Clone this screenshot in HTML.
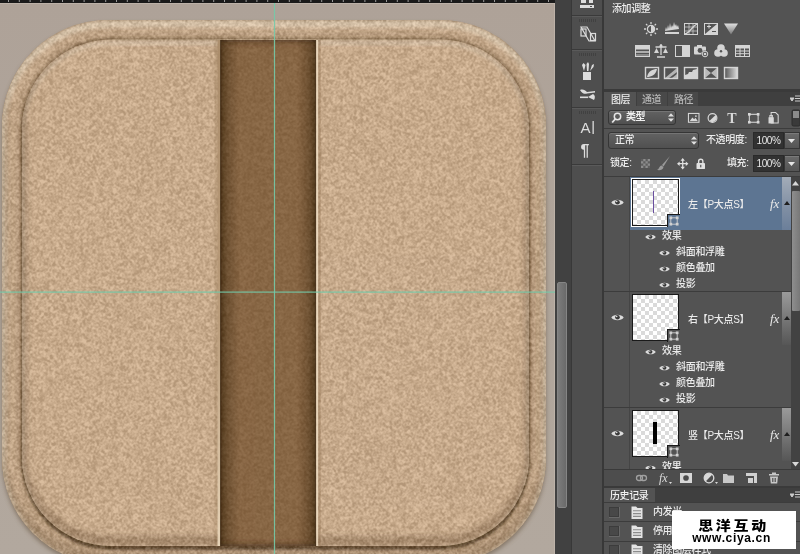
<!DOCTYPE html>
<html><head><meta charset="utf-8">
<style>
*{margin:0;padding:0;box-sizing:border-box}
html,body{width:800px;height:554px;overflow:hidden;background:#535353;font-family:"Liberation Sans","Noto Sans CJK SC",sans-serif;font-size:12px;color:#e0e0e0}
.abs{position:absolute}
#canvas{position:absolute;left:0;top:0;width:555px;height:554px;overflow:hidden}
#vscroll{position:absolute;left:555px;top:0;width:16px;height:554px;background:#414141}
#vthumb{position:absolute;left:2px;top:282px;width:10px;height:226px;border-radius:2px;background:linear-gradient(90deg,#7c7c7c,#6a6a6a);border:1px solid #858585}
#iconcol{position:absolute;left:571px;top:0;width:33px;height:554px;background:#4e4e4e;border-left:1px solid #383838;border-right:2px solid #383838}
#panels{position:absolute;left:604px;top:0;width:196px;height:554px;background:#535353}
.sep{position:absolute;left:0;width:30px;height:2px;background:#3a3a3a;border-bottom:1px solid #5a5a5a}
.grip{position:absolute;left:7px;width:17px;height:3px;background:repeating-linear-gradient(90deg,#414141 0 1px,#4e4e4e 1px 2px)}
.t,.fxl,.fx,#iconcol svg,#panels svg{will-change:transform}
.t{position:absolute;white-space:nowrap;line-height:14px}
</style></head><body>
<div id="canvas">
<!--CANVAS-->
<svg class="abs" style="left:0;top:0" width="556" height="554" viewBox="0 0 556 554">
<defs>
<linearGradient id="bgg" x1="0" y1="0" x2="0" y2="1"><stop offset="0" stop-color="#aea298"/><stop offset="1" stop-color="#b2a89e"/></linearGradient>
<linearGradient id="lstrip" x1="0" y1="0" x2="0" y2="1"><stop offset="0" stop-color="#a88a68"/><stop offset=".55" stop-color="#b89a78"/><stop offset="1" stop-color="#ead8bc"/></linearGradient>
<linearGradient id="slotg" x1="0" y1="0" x2="1" y2="0"><stop offset="0" stop-color="#523819"/><stop offset=".07" stop-color="#6e4f2e"/><stop offset=".2" stop-color="#896541"/><stop offset=".8" stop-color="#896541"/><stop offset=".93" stop-color="#6e4f2e"/><stop offset="1" stop-color="#523819"/></linearGradient>
<filter id="nz" x="0" y="0" width="100%" height="100%" color-interpolation-filters="sRGB">
<feTurbulence type="fractalNoise" baseFrequency="1.7" numOctaves="1" seed="11" result="t"/>
<feColorMatrix in="t" type="matrix" values="2.2 2.2 0 0 -1.7  2.2 2.2 0 0 -1.7  2.2 2.2 0 0 -1.7  0 0 0 0 1"/><feConvolveMatrix order="3" kernelMatrix="1 2 1 2 5 2 1 2 1" divisor="17" edgeMode="duplicate" preserveAlpha="true"/><feComponentTransfer><feFuncR type="linear" slope="2" intercept="-.5"/><feFuncG type="linear" slope="2" intercept="-.5"/><feFuncB type="linear" slope="2" intercept="-.5"/></feComponentTransfer>
</filter>
<filter id="b3" x="-10%" y="-10%" width="120%" height="120%"><feGaussianBlur stdDeviation="3"/></filter>
<filter id="b2" x="-10%" y="-10%" width="120%" height="120%"><feGaussianBlur stdDeviation="2"/></filter>
<filter id="b15" x="-10%" y="-10%" width="120%" height="120%"><feGaussianBlur stdDeviation="1.6"/></filter>
<filter id="b1" x="-10%" y="-10%" width="120%" height="120%"><feGaussianBlur stdDeviation="1"/></filter>
<filter id="b5" x="-10%" y="-10%" width="120%" height="120%"><feGaussianBlur stdDeviation="5"/></filter>
<clipPath id="cOuter"><rect x="2" y="20" width="544" height="544" rx="106"/></clipPath>
<clipPath id="cInner"><rect x="22" y="39.500" width="507" height="506.500" rx="89"/></clipPath>
<clipPath id="cSlot"><rect x="221" y="40" width="94.500" height="506"/></clipPath>
</defs>
<rect width="556" height="554" fill="url(#bgg)"/>
<rect x="0" y="3" width="556" height="1" fill="#c4bab0" opacity=".6"/>
<rect x="554" y="3" width="1" height="551" fill="#c4bab0" opacity=".6"/>
<!-- outer shadow -->
<rect x="2" y="23" width="544" height="544" rx="106" fill="#5a4630" opacity=".5" filter="url(#b2)"/>
<!-- outer -->
<rect x="2" y="20" width="544" height="544" rx="106" fill="#d0af8c"/>
<g clip-path="url(#cOuter)">
  <rect x="2" y="19" width="544" height="544" rx="106" fill="none" stroke="#7d6040" stroke-width="3" opacity=".4" filter="url(#b1)"/>
  <rect x="2" y="14" width="544" height="544" rx="106" fill="none" stroke="#6b4f30" stroke-width="8" opacity=".45" filter="url(#b3)"/>
  <rect x="2" y="24" width="544" height="544" rx="106" fill="none" stroke="#f8ead2" stroke-width="7" opacity=".55" filter="url(#b2)"/>
</g>
<!-- inner shadow/drop -->
<g clip-path="url(#cOuter)">
<rect x="22" y="39.500" width="507" height="506.500" rx="89" fill="none" stroke="#7d5f3e" stroke-width="9" opacity=".3" filter="url(#b3)"/>
<rect x="22" y="43" width="507" height="506.500" rx="89" fill="#4a3216" opacity=".9" filter="url(#b15)"/>
<rect x="22" y="39.500" width="507" height="506.500" rx="89" fill="none" stroke="#6e5233" stroke-width="2.500" opacity=".7" filter="url(#b1)"/>
</g>
<rect x="22" y="39.500" width="507" height="506.500" rx="89" fill="#d4b28e"/>
<g clip-path="url(#cInner)">
  <rect x="22" y="42.500" width="507" height="506.500" rx="89" fill="none" stroke="#f6e8d2" stroke-width="4" opacity=".55" filter="url(#b2)"/>
  <rect x="22" y="34.500" width="507" height="506.500" rx="89" fill="none" stroke="#6e5030" stroke-width="8" opacity=".5" filter="url(#b3)"/>
</g>
<!-- noise -->
<g clip-path="url(#cOuter)" opacity=".15">
  <rect x="0" y="0" width="556" height="554" filter="url(#nz)"/>
</g>
<!-- slot -->
<rect x="221" y="40" width="94.500" height="506" fill="url(#slotg)"/>
<g clip-path="url(#cSlot)">
  <rect x="211" y="36" width="114.500" height="514" fill="none" stroke="#2e1f10" stroke-width="12" opacity=".55" filter="url(#b3)"/>
  <rect x="0" y="0" width="556" height="554" filter="url(#nz)" opacity=".06"/>
</g>
<!-- left/right panel edges -->
<rect x="217.500" y="40" width="2.700" height="506" fill="url(#lstrip)" opacity=".9"/>
<rect x="214.500" y="40" width="3" height="506" fill="#7a5c3a" opacity=".18"/>
<rect x="220" y="40" width="1.300" height="506" fill="#3e2a14" opacity=".85"/>
<rect x="315" y="40" width="1.200" height="506" fill="#3e2a14" opacity=".8"/>
<rect x="316.200" y="40" width="2" height="506" fill="#ecdcc2" opacity=".85"/>
<rect x="318.200" y="40" width="2.500" height="506" fill="#7a5c3a" opacity=".3"/>
<!-- guides -->
<rect x="273.900" y="3" width="1.200" height="551" fill="#74caa8" opacity=".9"/>
<rect x="0" y="291.500" width="556" height="1.200" fill="#74caa8" opacity=".9"/>
<!-- ruler -->
<rect x="0" y="0" width="556" height="3" fill="#1a1a1a"/>
<g fill="#9a9a9a">
<rect x="8.0" y="0" width="1" height="2"/><rect x="18.8" y="0" width="1" height="2"/><rect x="29.6" y="0" width="1" height="2"/><rect x="40.4" y="0" width="1" height="2"/><rect x="51.2" y="0" width="1" height="2"/><rect x="62.0" y="0" width="1" height="2"/><rect x="72.8" y="0" width="1" height="2"/><rect x="83.6" y="0" width="1" height="2"/><rect x="94.4" y="0" width="1" height="2"/><rect x="105.2" y="0" width="1" height="2"/><rect x="116.0" y="0" width="1" height="2"/><rect x="126.8" y="0" width="1" height="2"/><rect x="137.6" y="0" width="1" height="2"/><rect x="148.4" y="0" width="1" height="2"/><rect x="159.2" y="0" width="1" height="2"/><rect x="170.0" y="0" width="1" height="2"/><rect x="180.8" y="0" width="1" height="2"/><rect x="191.6" y="0" width="1" height="2"/><rect x="202.4" y="0" width="1" height="2"/><rect x="213.2" y="0" width="1" height="2"/><rect x="224.0" y="0" width="1" height="2"/><rect x="234.8" y="0" width="1" height="2"/><rect x="245.6" y="0" width="1" height="2"/><rect x="256.4" y="0" width="1" height="2"/><rect x="267.2" y="0" width="1" height="2"/><rect x="278.0" y="0" width="1" height="2"/><rect x="288.8" y="0" width="1" height="2"/><rect x="299.6" y="0" width="1" height="2"/><rect x="310.4" y="0" width="1" height="2"/><rect x="321.2" y="0" width="1" height="2"/><rect x="332.0" y="0" width="1" height="2"/><rect x="342.8" y="0" width="1" height="2"/><rect x="353.6" y="0" width="1" height="2"/><rect x="364.4" y="0" width="1" height="2"/><rect x="375.2" y="0" width="1" height="2"/><rect x="386.0" y="0" width="1" height="2"/><rect x="396.8" y="0" width="1" height="2"/><rect x="407.6" y="0" width="1" height="2"/><rect x="418.4" y="0" width="1" height="2"/><rect x="429.2" y="0" width="1" height="2"/><rect x="440.0" y="0" width="1" height="2"/><rect x="450.8" y="0" width="1" height="2"/><rect x="461.6" y="0" width="1" height="2"/><rect x="472.4" y="0" width="1" height="2"/><rect x="483.2" y="0" width="1" height="2"/><rect x="494.0" y="0" width="1" height="2"/><rect x="504.8" y="0" width="1" height="2"/><rect x="515.6" y="0" width="1" height="2"/><rect x="526.4" y="0" width="1" height="2"/><rect x="537.2" y="0" width="1" height="2"/><rect x="548.0" y="0" width="1" height="2"/>
</g>
</svg>
<!--/CANVAS-->
</div>
<div id="vscroll"><div id="vthumb"></div></div>
<div id="iconcol">
<!--ICONCOL-->
<div class="sep" style="top:15px"></div><div class="grip" style="top:19px"></div>
<div class="sep" style="top:49px"></div><div class="grip" style="top:53px"></div>
<div class="sep" style="top:107px"></div><div class="grip" style="top:111px"></div>
<div class="sep" style="top:164px"></div>
<svg class="abs" style="left:0;top:0" width="30" height="170" viewBox="0 0 30 170">
<g fill="#dcdcdc">
<!-- top partial icon -->
<rect x="9" y="0" width="5" height="3"/><rect x="17" y="0" width="4" height="3"/><rect x="8" y="5" width="14" height="3"/><rect x="18" y="6" width="2" height="1" fill="#4e4e4e"/>
<!-- clone source -->
<g fill="none" stroke="#dcdcdc" stroke-width="1.200"><path d="M9 27h6l8 14h-6z"/><rect x="9" y="29" width="5" height="7"/><rect x="18.500" y="33.500" width="5" height="7"/></g>
<!-- brushes cup -->
<path d="M11 72h8v8h-8z"/><path d="M12 71l-2-6 1.500-2 2 2zM15 71l-.5-7 1.500-2 1 2-.5 7zM18 71l2-6 2-1-.5 3z"/>
<!-- brush presets -->
<path d="M8 90c3-1 5 0 7 2l8-1v1.500l-8 1c-2 1-5 0-7-3.500z"/><rect x="8" y="96.500" width="8" height="1.600"/><path d="M16 97l5-3c2 1 2.500 3.500 1 6z"/>
<!-- A| -->
</g>
<text x="8.500" y="133" font-family="Liberation Sans,sans-serif" font-size="15" fill="#dcdcdc">A</text><rect x="20.500" y="121" width="1.300" height="13" fill="#dcdcdc"/>
<text x="8.500" y="156" font-family="Liberation Sans,sans-serif" font-weight="bold" font-size="16" fill="#dcdcdc">¶</text>
</svg>
<!--/ICONCOL-->
</div>
<div id="panels">
<!--PANELS-->
<style>
#panels .t{color:#ececec;font-size:10px;font-weight:500;letter-spacing:-.4px}
.ic{position:absolute}
.dd{position:absolute;border:1px solid #363636;border-radius:3px;background:linear-gradient(#626262,#505050);box-shadow:inset 0 1px 0 #747474}
.fld{position:absolute;will-change:transform;background:#323232;border:1px solid #2a2a2a;color:#e6e6e6;font-size:10px;letter-spacing:-.4px;line-height:15px;text-align:center}
.btn{position:absolute;border:1px solid #363636;background:linear-gradient(#6a6a6a,#555);box-shadow:inset 0 1px 0 #7a7a7a}
.hl{position:absolute;left:0;width:196px;height:1px;background:#3c3c3c}
.eye{position:absolute;width:13px;height:9px}.eye.s{width:11px;height:8px}
.lrow{position:absolute;left:0;width:187px;height:54px}
.thumb{position:absolute;left:28px;top:2px;width:47px;height:47px;border:1px solid #1a1a1a;background-color:#fff;background-image:linear-gradient(45deg,#dadada 25%,transparent 25%,transparent 75%,#dadada 75%),linear-gradient(45deg,#dadada 25%,transparent 25%,transparent 75%,#dadada 75%);background-size:8px 8px;background-position:0 0,4px 4px}
.vm{position:absolute;left:63px;top:37px;width:13px;height:13px;background:#535353;border-top:1px solid #1a1a1a;border-left:1px solid #1a1a1a}
.fx{position:absolute;left:166px;font-family:"Liberation Serif",serif;font-style:italic;font-size:13px;color:#e8e8e8;line-height:14px}
.grad{position:absolute;left:178px;width:9px;height:53px}
.fxl{position:absolute;font-size:10px;font-weight:500;letter-spacing:-.3px;color:#ececec;white-space:nowrap;line-height:14px}
</style>
<!-- adjustments -->
<div class="t" style="left:8px;top:2px">添加调整</div>
<svg class="abs" style="left:0;top:0" width="196" height="90" viewBox="0 0 196 90">
<g fill="#d4d4d4" stroke="none">
<!-- row1 y~29 -->
<g transform="translate(47,29)"><circle r="3.6" fill="none" stroke="#d4d4d4" stroke-width="1.3"/><path d="M0-3.6A3.6 3.6 0 0 1 0 3.6z"/><g stroke="#d4d4d4" stroke-width="1.3"><path d="M0-7v2M0 5v2M-7 0h2M5 0h2M-5-5l1.4 1.4M3.6 3.6L5 5M-5 5l1.4-1.4M3.6-3.6L5-5"/></g></g>
<g transform="translate(61,23)"><path d="M0 11h14v-2h-14zM0 8l1-4 1 3 1-5 1 4 1-6 1 5 1-3 1 2 1-5 1 4 1-2 1 3 1-2 1 4z"/></g>
<g transform="translate(80,23)"><rect x=".5" y=".5" width="13" height="11" fill="none" stroke="#d4d4d4"/><path d="M1 4h12M1 8h12M5 1v10M9 1v10" stroke="#d4d4d4" stroke-width=".7" fill="none"/><path d="M1 11C6 10 8 3 13 1" stroke="#d4d4d4" stroke-width="1.3" fill="none"/></g>
<g transform="translate(100,23)"><rect x=".5" y=".5" width="13" height="11" fill="none" stroke="#d4d4d4"/><path d="M1 11L13 1V11z"/><path d="M3 3.5h4M5 1.5v4" stroke="#d4d4d4" fill="none"/><path d="M8 8.5h4" stroke="#535353" fill="none"/></g>
<g transform="translate(120,23)"><path d="M0 .5h14l-7 11z" fill="url(#gv)"/></g>
<!-- row2 y~51 -->
<g transform="translate(31,45)"><rect x=".5" y=".5" width="14" height="11" fill="none" stroke="#d4d4d4"/><rect x="1" y="1" width="13" height="3.5"/><rect x="1" y="6" width="13" height="2" opacity=".7"/><rect x="1" y="9" width="13" height="2" opacity=".4"/></g>
<g transform="translate(50,44)"><path d="M7 0v11M3 13h8M1.5 3h11" stroke="#d4d4d4" stroke-width="1.3" fill="none"/><path d="M0 9h5l-2.5-5zM9 9h5l-2.5-5z"/><circle cx="7" cy="2" r="1.6"/></g>
<g transform="translate(71,45)"><rect x=".5" y=".5" width="14" height="11" fill="none" stroke="#d4d4d4"/><rect x="7" y="1" width="7" height="10"/></g>
<g transform="translate(90,44)"><rect x="0" y="2.5" width="12" height="8" rx="1"/><rect x="3" y="1" width="5" height="2"/><circle cx="6" cy="6.5" r="2.4" fill="#535353"/><circle cx="11" cy="10" r="3.6" fill="#535353"/><circle cx="11" cy="10" r="2.8" fill="none" stroke="#d4d4d4"/><circle cx="11" cy="10" r="1.3"/></g>
<g transform="translate(110,44)"><circle cx="7" cy="4" r="3.8"/><circle cx="4" cy="9" r="3.8"/><circle cx="10" cy="9" r="3.8"/><circle cx="7" cy="7.2" r="1.2" fill="#535353"/></g>
<g transform="translate(131,45)"><rect x=".5" y=".5" width="14" height="11" fill="none" stroke="#d4d4d4"/><rect x="1" y="1" width="13" height="2.5"/><path d="M1 6h13M1 8.7h13M5 3v8M9.5 3v8" stroke="#d4d4d4" stroke-width="1" fill="none"/></g>
<!-- row3 y~73 -->
<g transform="translate(41,67)"><rect x=".5" y=".5" width="13" height="11" fill="none" stroke="#d4d4d4" stroke-width="1.4"/><path d="M2 10C3 4 8 2 12 2C11 8 6 10 2 10z"/></g>
<g transform="translate(60,67)"><rect x=".5" y=".5" width="13" height="11" fill="none" stroke="#d4d4d4" stroke-width="1.4"/><path d="M1 11L13 1v4L5 11zM8 11l5-4v4z" opacity=".75"/></g>
<g transform="translate(80,67)"><rect x=".5" y=".5" width="13" height="11" fill="none" stroke="#d4d4d4" stroke-width="1.4"/><path d="M1 8l3-1 1-2 3 0 1-2 4-1V11H1z"/></g>
<g transform="translate(100,67)"><rect x=".5" y=".5" width="13" height="11" fill="none" stroke="#d4d4d4" stroke-width="1.4"/><path d="M1 1l6 5-6 5zM13 1l-6 5 6 5z" opacity=".8"/></g>
<g transform="translate(120,67)"><rect x=".5" y=".5" width="13" height="11" fill="url(#gh)" stroke="#d4d4d4" stroke-width="1.4"/></g>
</g>
<defs><linearGradient id="gv" x1="0" y1="0" x2="0" y2="1"><stop offset="0" stop-color="#e0e0e0"/><stop offset="1" stop-color="#777"/></linearGradient>
<linearGradient id="gh" x1="0" y1="0" x2="1" y2="0"><stop offset="0" stop-color="#555"/><stop offset="1" stop-color="#ddd"/></linearGradient></defs>
</svg>
<div class="abs" style="left:0;top:89px;width:196px;height:3px;background:#3a3a3a"></div>
<!-- tabs -->
<div class="abs" style="left:0;top:92px;width:196px;height:14px;background:#3f3f3f"></div>
<div class="abs" style="left:0;top:92px;width:32px;height:15px;background:#535353"></div>
<div class="abs" style="left:33px;top:92px;width:30px;height:14px;background:#494949"></div>
<div class="abs" style="left:64px;top:92px;width:30px;height:14px;background:#494949"></div>
<div class="t" style="left:7px;top:93px;color:#f0f0f0">图层</div>
<div class="t" style="left:38px;top:93px;color:#b4b4b4">通道</div>
<div class="t" style="left:70px;top:93px;color:#b4b4b4">路径</div>
<svg class="abs" style="left:186px;top:95px" width="10" height="8"><path d="M0 3h4l-2 3zM5 1h5M5 3.5h5M5 6h5" fill="#ccc" stroke="#ccc"/></svg>
<!-- filter row -->
<div class="dd" style="left:4px;top:110px;width:68px;height:15px"></div>
<svg class="abs" style="left:7px;top:112px" width="12" height="12"><circle cx="6.5" cy="4.5" r="3.2" fill="none" stroke="#e6e6e6" stroke-width="1.5"/><path d="M4.2 7L1.2 10.5" stroke="#e6e6e6" stroke-width="1.8"/></svg>
<div class="t" style="left:22px;top:110px;font-weight:bold;color:#f0f0f0">类型</div>
<svg class="abs" style="left:64px;top:113px" width="6" height="9"><path d="M0 3.500L3 .3 6 3.500zM0 5.500L3 8.700 6 5.500z" fill="#e0e0e0"/></svg>
<svg class="abs" style="left:80px;top:108px" width="116" height="20" viewBox="0 0 116 20">
<g transform="translate(4,5) scale(.88)"><rect x=".5" y=".5" width="12" height="10" fill="none" stroke="#d8d8d8" stroke-width="1.2"/><path d="M2 9l3-4 2 2 1.5-1.5L11 9z" fill="#d8d8d8"/><circle cx="9" cy="3.5" r="1" fill="#d8d8d8"/></g>
<g transform="translate(28.500,10) scale(.88)"><circle r="5" fill="none" stroke="#d8d8d8" stroke-width="1.3"/><path d="M-3.500 3.500A5 5 0 0 0 3.500-3.500z" fill="#d8d8d8"/></g>
<text x="43.200" y="15" font-family="Liberation Serif,serif" font-weight="bold" font-size="14" fill="#d8d8d8">T</text>
<g transform="translate(64,5) scale(.88)" fill="#d8d8d8"><rect x="1.500" y="1.500" width="10" height="9" fill="none" stroke="#d8d8d8" stroke-width="1.2"/><rect x="0" y="0" width="3" height="3"/><rect x="10" y="0" width="3" height="3"/><rect x="0" y="9" width="3" height="3"/><rect x="10" y="9" width="3" height="3"/></g>
<g transform="translate(84.500,4) scale(.88)" fill="#d8d8d8"><path d="M3 .5h5l3 3v9h-8z" fill="none" stroke="#d8d8d8" stroke-width="1.2"/><rect x="0" y="6" width="6" height="7"/><rect x="1.500" y="4" width="3" height="3" fill="none" stroke="#d8d8d8"/></g>
<g transform="translate(108,2)"><rect x="0" y="0" width="8" height="16" rx="1.500" fill="#3a3a3a" stroke="#2c2c2c"/><rect x="1" y="1" width="6" height="7" fill="#8a8a8a"/></g>
</svg>
<div class="hl" style="top:128px"></div>
<!-- blend row -->
<div class="dd" style="left:4px;top:132px;width:91px;height:17px"></div>
<div class="t" style="left:11px;top:133px">正常</div>
<svg class="abs" style="left:86.500px;top:136px" width="6" height="9"><path d="M0 3.500L3 .3 6 3.500zM0 5.500L3 8.700 6 5.500z" fill="#e0e0e0"/></svg>
<div class="t" style="left:102px;top:133px">不透明度:</div>
<div class="fld" style="left:149px;top:132px;width:31px;height:17px">100%</div>
<div class="btn" style="left:180px;top:132px;width:16px;height:17px"></div>
<svg class="abs" style="left:184px;top:139px" width="8" height="5"><path d="M0 0h7l-3.500 4z" fill="#e6e6e6"/></svg>
<!-- lock row -->
<div class="t" style="left:6px;top:156px">锁定:</div>
<svg class="abs" style="left:36px;top:154px" width="70" height="18" viewBox="0 0 70 18">
<g transform="translate(1,5) scale(.9)"><rect width="10" height="10" fill="#8c8c8c"/><path d="M0 0h2.500v2.500h-2.500zM5 0h2.500v2.500h-2.500zM2.500 2.500h2.500v2.500h-2.500zM7.500 2.500h2.500v2.500h-2.500zM0 5h2.500v2.500h-2.500zM5 5h2.500v2.500h-2.500zM2.500 7.500h2.500v2.500h-2.500zM7.500 7.500h2.500v2.500h-2.500z" fill="#5e5e5e"/></g>
<g transform="translate(17,2)"><path d="M13 0L5 9l1.500 1.500z" fill="#9a9a9a"/><path d="M4.500 9.500C2 10 2.500 13 0 14c3 .5 6 0 6.500-3z" fill="#9a9a9a"/></g>
<g transform="translate(37,4) scale(.88)" fill="#e0e0e0"><path d="M6.500 0l2.500 3h-5zM6.500 13l2.500-3h-5zM0 6.500l3-2.500v5zM13 6.500l-3-2.500v5z"/><path d="M6.500 2v9M2 6.500h9" stroke="#e0e0e0" stroke-width="1.400"/></g>
<g transform="translate(56.500,4) scale(.85)" fill="#e0e0e0"><path d="M2.500 6V4a2.500 2.500 0 0 1 5 0v2" fill="none" stroke="#e0e0e0" stroke-width="1.600"/><rect x="0" y="6" width="10" height="7" rx="1"/><rect x="4.300" y="8" width="1.400" height="3" fill="#535353"/></g>
</svg>
<div class="t" style="left:123px;top:156px">填充:</div>
<div class="fld" style="left:149px;top:155px;width:31px;height:17px">100%</div>
<div class="btn" style="left:180px;top:155px;width:16px;height:17px"></div>
<svg class="abs" style="left:184px;top:162px" width="8" height="5"><path d="M0 0h7l-3.500 4z" fill="#e6e6e6"/></svg>
<div class="hl" style="top:176px"></div>
<!--LAYERS-->
<!-- layer rows -->
<svg width="0" height="0" style="position:absolute"><defs>
<symbol id="eye" viewBox="0 0 13 9"><path d="M.3 4.500C2.500 .800 10.500 .800 12.700 4.500C10.500 8.200 2.500 8.200 .300 4.500z" fill="#dcdcdc"/><circle cx="6.500" cy="4.300" r="2.300" fill="#3a3a3a"/><circle cx="5.700" cy="3.500" r=".8" fill="#dcdcdc"/></symbol>
<symbol id="vmask" viewBox="0 0 11 11"><rect x="2" y="2" width="7" height="7" fill="none" stroke="#d0d0d0" stroke-width="1"/><rect x="0.500" y="0.500" width="3" height="3" fill="#d0d0d0"/><rect x="7.500" y="0.500" width="3" height="3" fill="#d0d0d0"/><rect x="0.500" y="7.500" width="3" height="3" fill="#d0d0d0"/><rect x="7.500" y="7.500" width="3" height="3" fill="#d0d0d0"/></symbol>
</defs></svg>
<div class="abs" style="left:25px;top:177px;width:1px;height:292px;background:#454545"></div>
<!-- L1 -->
<div class="lrow" style="top:177px">
 <div class="abs" style="left:26px;top:0;width:161px;height:53px;background:#5d7592"></div>
 <div class="grad" style="top:0;background:linear-gradient(#a3acb8,#7f8ea3 60%,#6b7f9a)"></div>
 <svg class="eye" style="left:7px;top:21px"><use href="#eye"/></svg>
 <div class="thumb" style="outline:1px solid #fff;outline-offset:0"><div class="abs" style="left:20px;top:11px;width:1px;height:22px;background:#6a4fa0"></div></div>
 <div class="vm" style="background:#5d7592"><svg class="abs" style="left:1px;top:1px" width="10" height="10"><use href="#vmask"/></svg></div>
 <div class="fxl" style="left:84px;top:21px">左【P大点S】</div>
 <div class="fx" style="top:20px">fx</div>
 <svg class="abs" style="left:180px;top:24px" width="6" height="5"><path d="M0 4h6l-3-4z" fill="#1e1e1e"/></svg>
</div>
<svg class="eye s" style="left:41px;top:233px"><use href="#eye"/></svg><div class="fxl" style="left:58px;top:229px">效果</div>
<svg class="eye s" style="left:55px;top:249px"><use href="#eye"/></svg><div class="fxl" style="left:72px;top:245px">斜面和浮雕</div>
<svg class="eye s" style="left:55px;top:265px"><use href="#eye"/></svg><div class="fxl" style="left:72px;top:261px">颜色叠加</div>
<svg class="eye s" style="left:55px;top:281px"><use href="#eye"/></svg><div class="fxl" style="left:72px;top:277px">投影</div>
<div class="hl" style="top:291px;width:187px"></div>
<!-- L2 -->
<div class="lrow" style="top:292px">
 <div class="grad" style="top:0;background:linear-gradient(#9a9a9a,#6a6a6a 70%,#565656)"></div>
 <svg class="eye" style="left:7px;top:21px"><use href="#eye"/></svg>
 <div class="thumb"></div>
 <div class="vm"><svg class="abs" style="left:1px;top:1px" width="10" height="10"><use href="#vmask"/></svg></div>
 <div class="fxl" style="left:84px;top:21px">右【P大点S】</div>
 <div class="fx" style="top:20px">fx</div>
 <svg class="abs" style="left:180px;top:24px" width="6" height="5"><path d="M0 4h6l-3-4z" fill="#1e1e1e"/></svg>
</div>
<svg class="eye s" style="left:41px;top:348px"><use href="#eye"/></svg><div class="fxl" style="left:58px;top:344px">效果</div>
<svg class="eye s" style="left:55px;top:364px"><use href="#eye"/></svg><div class="fxl" style="left:72px;top:360px">斜面和浮雕</div>
<svg class="eye s" style="left:55px;top:380px"><use href="#eye"/></svg><div class="fxl" style="left:72px;top:376px">颜色叠加</div>
<svg class="eye s" style="left:55px;top:396px"><use href="#eye"/></svg><div class="fxl" style="left:72px;top:392px">投影</div>
<div class="hl" style="top:407px;width:187px"></div>
<!-- L3 -->
<div class="lrow" style="top:408px">
 <div class="grad" style="top:0;background:linear-gradient(#9a9a9a,#6a6a6a 70%,#565656)"></div>
 <svg class="eye" style="left:7px;top:21px"><use href="#eye"/></svg>
 <div class="thumb"><div class="abs" style="left:20px;top:11px;width:4px;height:22px;background:#000"></div></div>
 <div class="vm"><svg class="abs" style="left:1px;top:1px" width="10" height="10"><use href="#vmask"/></svg></div>
 <div class="fxl" style="left:84px;top:21px">竖【P大点S】</div>
 <div class="fx" style="top:20px">fx</div>
 <svg class="abs" style="left:180px;top:24px" width="6" height="5"><path d="M0 4h6l-3-4z" fill="#1e1e1e"/></svg>
</div>
<div class="abs" style="left:26px;top:461px;width:161px;height:8px;overflow:hidden"><svg class="eye s" style="left:15px;top:3px"><use href="#eye"/></svg><div class="fxl" style="left:32px;top:-1px">效果</div></div>
<!-- layers scrollbar -->
<div class="abs" style="left:187px;top:177px;width:9px;height:292px;background:#424242"></div>
<svg class="abs" style="left:188px;top:181px" width="7" height="5"><path d="M0 4.500h7l-3.500-4.500z" fill="#d8d8d8"/></svg>
<div class="abs" style="left:188px;top:191px;width:8px;height:120px;background:linear-gradient(90deg,#8e8e8e,#787878);border-radius:1px"></div>
<svg class="abs" style="left:188px;top:462px" width="7" height="5"><path d="M0 0h7l-3.500 4.500z" fill="#d8d8d8"/></svg>
<!-- bottom bar -->
<div class="abs" style="left:0;top:469px;width:196px;height:17px;background:#4d4d4d;border-top:1px solid #3a3a3a"></div>
<svg class="abs" style="left:0;top:470px" width="196" height="16" viewBox="0 0 196 16">
<g fill="none" stroke="#a0a0a0" stroke-width="1.300"><rect x="32.500" y="5.500" width="6" height="5" rx="2.500"/><rect x="36.500" y="5.500" width="6" height="5" rx="2.500"/></g>
<text x="55" y="12" font-family="Liberation Serif,serif" font-style="italic" font-size="12" fill="#dcdcdc">fx</text><path d="M65 12h3l-1.500 2z" fill="#dcdcdc"/>
<g><rect x="76" y="3" width="12" height="10" fill="#d8d8d8"/><circle cx="82" cy="8" r="2.800" fill="#4d4d4d"/></g>
<g><circle cx="105" cy="8" r="4.800" fill="none" stroke="#d8d8d8" stroke-width="1.300"/><path d="M101.600 11.400A4.800 4.800 0 0 1 108.400 4.600z" fill="#d8d8d8"/><path d="M111 12h3l-1.500 2z" fill="#d8d8d8"/></g>
<path d="M119 4h4l1 1.500h6v7.500h-11z" fill="#c8c8c8"/>
<g><path d="M142 3h11v10h-3v-7h-8z" fill="#d0d0d0"/><path d="M144 8h5v5h-5z" fill="#d0d0d0"/></g>
<g fill="#c8c8c8"><rect x="165" y="4" width="10" height="1.500"/><rect x="168" y="2.500" width="4" height="1.500"/><path d="M166 6.500h8l-.8 7h-6.400z"/></g>
<g stroke="#4d4d4d" stroke-width=".8"><path d="M168.500 8v4M170 8v4M171.500 8v4"/></g>
</svg>
<div class="abs" style="left:0;top:486px;width:196px;height:2px;background:#3a3a3a"></div>
<!-- history -->
<div class="abs" style="left:0;top:488px;width:196px;height:14px;background:#3f3f3f"></div>
<div class="abs" style="left:0;top:488px;width:51px;height:15px;background:#535353"></div>
<div class="t" style="left:6px;top:489px;color:#f0f0f0">历史记录</div>
<svg class="abs" style="left:186px;top:491px" width="10" height="8"><path d="M0 3h4l-2 3zM5 1h5M5 3.500h5M5 6h5" fill="#ccc" stroke="#ccc"/></svg>
<div class="hl" style="top:502px"></div><div class="hl" style="top:521px"></div>
<div class="hl" style="top:541px"></div>
<svg class="abs" style="left:0;top:502px" width="60" height="52" viewBox="0 0 60 52">
<defs><g id="hd"><rect x="5.500" y="1.500" width="9" height="9" fill="#484848" stroke="#3c3c3c"/><path d="M5 11.500h10.500v-10.500" fill="none" stroke="#686868" stroke-width="1"/><path d="M27.500 .5h4.500l1.500 1.500h5v11h-11z" fill="#e4e4e4"/><path d="M29 4.800h8M29 7.600h8M29 10.400h8" stroke="#8c8c8c" stroke-width="1.100"/></g></defs>
<use href="#hd" y="4"/><use href="#hd" y="23"/><use href="#hd" y="42"/>
</svg>
<div class="t" style="left:49px;top:505px">内发光</div>
<div class="t" style="left:49px;top:524px">停用图层效果</div>
<div class="t" style="left:49px;top:543px">清除图层样式</div>
<!-- watermark -->
<div class="abs" style="left:68px;top:511px;width:124px;height:38px;background:#fff"></div>
<div class="abs" style="left:67px;top:517px;width:125px;text-align:center;font-family:'Liberation Sans','Noto Sans CJK SC',sans-serif;font-weight:900;font-size:13px;line-height:18px;color:#000;letter-spacing:2.4px;transform:scaleX(1.15);transform-origin:62px 0">思洋互动</div>
<div class="abs" style="left:65px;top:531px;width:125px;text-align:center;font-family:'Liberation Sans',sans-serif;font-weight:bold;font-size:12px;line-height:14px;color:#000;letter-spacing:.65px">www.ciya.cn</div>
<!--/LAYERS-->
<!--/PANELS-->
</div>
</body></html>
